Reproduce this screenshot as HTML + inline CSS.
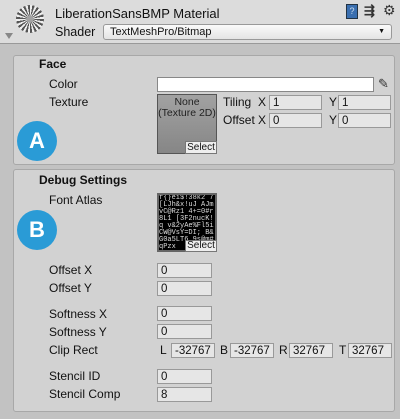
<!DOCTYPE html><html><head><style>
*{margin:0;padding:0;box-sizing:border-box}
body{width:400px;height:419px;background:#c2c2c2;font-family:"Liberation Sans",sans-serif;font-size:12px;color:#111;position:relative;overflow:hidden}
.a{position:absolute;white-space:nowrap}
.hdr{position:absolute;left:0;top:0;width:400px;height:44px;background:#dcdcdc;border-bottom:1px solid #999}
.panel{position:absolute;left:13px;width:382px;background:#d2d2d2;border:1px solid #a8a8a8;border-radius:3px}
.f{position:absolute;height:15px;background:#e6e6e6;border:1px solid #999;font-size:11.5px;line-height:14px;padding-left:3px;overflow:hidden}
.c{position:absolute;width:40px;height:40px;border-radius:50%;background:#2a9bd6;color:#fff;font-weight:bold;font-size:22px;text-align:center;line-height:40px}
</style></head><body>
<div class="hdr"></div>
<div class="a" style="left:16px;top:5px;width:28px;height:28px;border-radius:50%;background:repeating-conic-gradient(#eee 0 10deg,#555 10deg 20deg);"></div>
<div class="a" style="left:5px;top:33px;width:0;height:0;border-left:4px solid transparent;border-right:4px solid transparent;border-top:6px solid #888"></div>
<div class="a" style="left:55px;top:6px;font-size:13px">LiberationSansBMP Material</div>
<div class="a" style="left:55px;top:25px;font-size:12.5px">Shader</div>
<div class="a" style="left:103px;top:24px;width:289px;height:16px;border:1px solid #999;border-radius:3px;background:linear-gradient(#fafafa,#e4e4e4);font-size:11px;line-height:14px;padding-left:6px">TextMeshPro/Bitmap<span style="position:absolute;right:6px;font-size:7px">▼</span></div>
<div class="a" style="left:346px;top:4px;width:12px;height:15px;background:#3a6fb0;border:1px solid #234;color:#cde;font-size:9px;text-align:center;line-height:13px">?</div>
<div class="a" style="left:364px;top:3px;font-size:13px;font-weight:bold;color:#333">⇶</div>
<div class="a" style="left:383px;top:2px;font-size:14px;color:#333">⚙</div>

<div class="panel" style="top:55px;height:110px"></div>
<div class="a" style="left:39px;top:57px;font-weight:bold">Face</div>
<div class="a" style="left:49px;top:77px">Color</div>
<div class="a" style="left:157px;top:77px;width:217px;height:15px;background:#fff;border:1px solid #888"></div>
<div class="a" style="left:378px;top:76px;font-size:13px;color:#333">✎</div>
<div class="a" style="left:49px;top:95px">Texture</div>
<div class="a" style="left:157px;top:94px;width:60px;height:60px;background:linear-gradient(#a2a2a2,#868686);border:1px solid #555;font-size:10.5px;text-align:center;line-height:11px;color:#222;padding-top:2px">None<br>(Texture 2D)</div>
<div class="a" style="left:185px;top:141px;width:32px;height:13px;background:#eee;border:1px solid #777;font-size:10px;line-height:11px;text-align:center">Select</div>
<div class="a" style="left:223px;top:95px">Tiling</div><div class="a" style="left:258px;top:95px">X</div>
<div class="f" style="left:269px;top:95px;width:53px">1</div>
<div class="a" style="left:329px;top:95px">Y</div><div class="f" style="left:338px;top:95px;width:53px">1</div>
<div class="a" style="left:223px;top:113px">Offset</div><div class="a" style="left:258px;top:113px">X</div>
<div class="f" style="left:269px;top:113px;width:53px">0</div>
<div class="a" style="left:329px;top:113px">Y</div><div class="f" style="left:338px;top:113px;width:53px">0</div>
<div class="c" style="left:17px;top:121px">A</div>

<div class="panel" style="top:169px;height:243px"></div>
<div class="a" style="left:39px;top:173px;font-weight:bold">Debug Settings</div>
<div class="a" style="left:49px;top:193px">Font Atlas</div>
<div class="a" style="left:157px;top:193px;width:60px;height:59px;background:#000;border:2px solid #666;overflow:hidden;font-family:'Liberation Mono',monospace;font-size:7px;line-height:7px;color:#ddd;white-space:normal;word-break:break-all">f{}ei$!38k2 7[LJh&amp;x!uJ AJmvC@Rz1 4+=0#r8L1 [3F2nucK!q v&amp;2yAe%Fl5i CW@VsY=DI; B&amp;G0a5LT6 9s@m#qPzx</div>
<div class="a" style="left:185px;top:240px;width:32px;height:12px;background:#eee;border:1px solid #777;font-size:10px;line-height:10px;text-align:center">Select</div>
<div class="c" style="left:17px;top:210px">B</div>
<div class="a" style="left:49px;top:263px">Offset X</div><div class="f" style="left:157px;top:263px;width:55px">0</div>
<div class="a" style="left:49px;top:281px">Offset Y</div><div class="f" style="left:157px;top:281px;width:55px">0</div>
<div class="a" style="left:49px;top:307px">Softness X</div><div class="f" style="left:157px;top:306px;width:55px">0</div>
<div class="a" style="left:49px;top:325px">Softness Y</div><div class="f" style="left:157px;top:324px;width:55px">0</div>
<div class="a" style="left:49px;top:343px">Clip Rect</div>
<div class="a" style="left:160px;top:343px">L</div><div class="f" style="left:171px;top:343px;width:44px">-32767</div>
<div class="a" style="left:220px;top:343px">B</div><div class="f" style="left:230px;top:343px;width:44px">-32767</div>
<div class="a" style="left:279px;top:343px">R</div><div class="f" style="left:289px;top:343px;width:44px">32767</div>
<div class="a" style="left:339px;top:343px">T</div><div class="f" style="left:348px;top:343px;width:44px">32767</div>
<div class="a" style="left:49px;top:369px">Stencil ID</div><div class="f" style="left:157px;top:369px;width:55px">0</div>
<div class="a" style="left:49px;top:387px">Stencil Comp</div><div class="f" style="left:157px;top:387px;width:55px">8</div>
</body></html>
